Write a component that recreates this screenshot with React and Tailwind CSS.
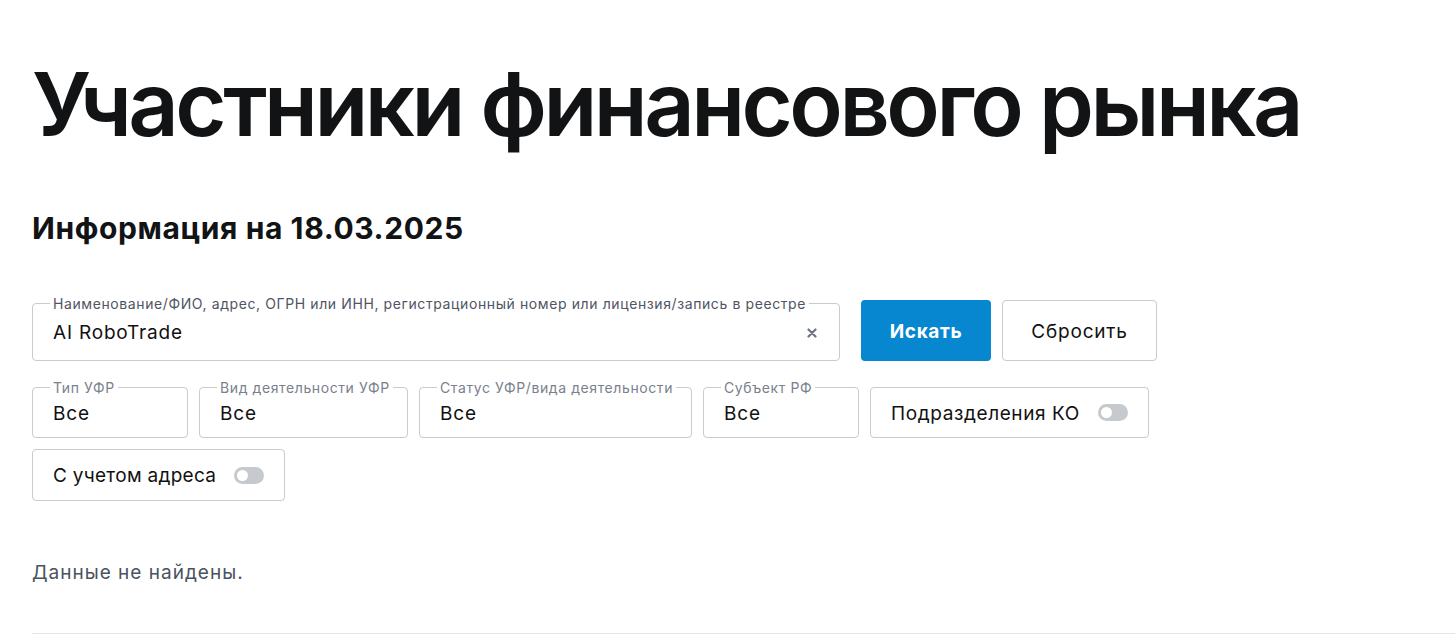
const font = { fontFamily: 'Inter, "Noto Sans", sans-serif' }

function Field({ label, value, width }) {
  return (
    <div className={`relative h-[51px] ${width} border border-[#c9cbcf] rounded-[4px] flex items-center pl-5 shrink-0`}>
      <span className="absolute left-[17px] top-0 -translate-y-1/2 bg-white px-[3px] text-[14px] leading-4 tracking-[0.6px] text-[#7a808c] whitespace-nowrap">
        {label}
      </span>
      <span className="text-[19px] tracking-[0.8px] text-[#111] mt-[4px]">{value}</span>
    </div>
  )
}

function Toggle() {
  return (
    <span className="inline-flex items-center w-[30px] h-[17px] rounded-full bg-[#c6c9cd] px-[3px] shrink-0">
      <span className="w-[11px] h-[11px] rounded-full bg-white" />
    </span>
  )
}

export default function App() {
  return (
    <div className="bg-white min-h-screen overflow-hidden" style={font}>
      <div className="pl-8">
        <h1 className="text-[88px] leading-none font-semibold text-[#111315] tracking-[-3.5px] mt-[60px] whitespace-nowrap">
          Участники финансового рынка
        </h1>
        <h2 className="text-[30px] leading-[36px] font-bold text-[#111315] tracking-[0.6px] mt-[62px]">
          Информация на 18.03.2025
        </h2>

        {/* Search row */}
        <div className="flex items-end gap-[11px] mt-[54px]">
          <div className="relative h-[58px] w-[808px] border border-[#c9cbcf] rounded-[4px] flex items-center pl-5 pr-[22px] mr-[10px]">
            <span className="absolute left-[17px] top-0 -translate-y-1/2 bg-white px-[3px] text-[14px] leading-4 tracking-[0.6px] text-[#4f5563] whitespace-nowrap">
              Наименование/ФИО, адрес, ОГРН или ИНН, регистрационный номер или лицензия/запись в реестре
            </span>
            <span className="flex-1 text-[19px] tracking-[0.8px] text-[#111] mt-[3px]">AI RoboTrade</span>
            <svg width="10" height="10" viewBox="0 0 10 10" className="mt-[2px]">
              <path d="M1.5 1.5 L8.5 8.5 M8.5 1.5 L1.5 8.5" stroke="#6e7480" strokeWidth="2.2" strokeLinecap="round" />
            </svg>
          </div>
          <button className="h-[61px] w-[130px] rounded-[4px] bg-[#0787cf] text-white text-[19px] tracking-[0.6px] font-bold pt-[3px]">
            Искать
          </button>
          <button className="h-[61px] w-[155px] rounded-[4px] border border-[#c9cbcf] bg-white text-[#111] text-[19px] tracking-[0.8px] pt-[3px]">
            Сбросить
          </button>
        </div>

        {/* Filters */}
        <div className="flex gap-[11px] mt-[26px]">
          <Field label="Тип УФР" value="Все" width="w-[156px]" />
          <Field label="Вид деятельности УФР" value="Все" width="w-[209px]" />
          <Field label="Статус УФР/вида деятельности" value="Все" width="w-[273px]" />
          <Field label="Субъект РФ" value="Все" width="w-[156px]" />
          <div className="h-[51px] w-[279px] border border-[#c9cbcf] rounded-[4px] flex items-center justify-between pl-5 pr-5">
            <span className="text-[19px] tracking-[0.6px] text-[#111] mt-[3px]">Подразделения КО</span>
            <Toggle />
          </div>
        </div>
        <div className="flex mt-[11px]">
          <div className="h-[52px] w-[253px] border border-[#c9cbcf] rounded-[4px] flex items-center justify-between pl-5 pr-5">
            <span className="text-[19px] tracking-[0.3px] text-[#111] mt-[2px]">С учетом адреса</span>
            <Toggle />
          </div>
        </div>

        <p className="text-[19px] tracking-[1px] text-[#4b5261] mt-[60px] leading-6">Данные не найдены.</p>
        <div className="border-t border-[#e4e5e7] mt-[48px]" />
      </div>
    </div>
  )
}
